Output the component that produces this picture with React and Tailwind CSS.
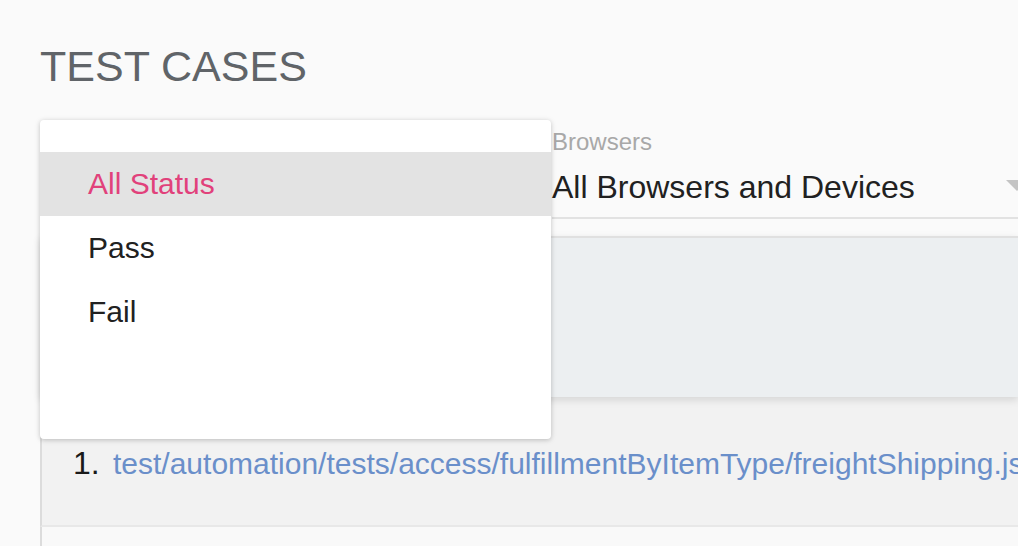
const statusOptions = ['All Status', 'Pass', 'Fail'];

function Select({ label, value, arrow, className }) {
  return (
    <div className={className}>
      <div className="text-[24px] leading-none text-[#a8a8a8]">{label}</div>
      <div className="mt-[17px] flex items-start justify-between border-b-2 border-[#e2e2e2] pb-[14px]">
        <span className="h-8 text-[32px] leading-none text-[#212121] whitespace-nowrap">{value}</span>
        {arrow && (
          <span className="mt-[9px] mr-[14px] h-0 w-0 border-x-[11px] border-t-[11px] border-x-transparent border-t-[#c4c4c4]" />
        )}
      </div>
    </div>
  );
}

export default function App() {
  return (
    <div className="h-[546px] w-full overflow-hidden bg-[#fafafa] font-['Liberation_Sans',Arial,sans-serif]">
      <div className="pl-10 pt-[45px]">
        <h1 className="text-[43px] leading-none text-[#606468] whitespace-nowrap">TEST CASES</h1>

        <div className="relative mt-[42px] flex gap-8">
          {/* status select sits under the open menu */}
          <Select label="" value="" className="w-[480px] shrink-0" />
          <Select label="Browsers" value="All Browsers and Devices" arrow className="w-[490px] shrink-0" />

          <div className="absolute left-0 top-[-10px] z-20 w-[511px] rounded-[4px] bg-white pt-8 pb-[95px] shadow-[0_1px_6px_rgba(0,0,0,0.12),0_1px_4px_rgba(0,0,0,0.12)]">
            {statusOptions.map((opt, i) => (
              <div
                key={opt}
                className={`h-16 pl-[48px] text-[30px] leading-[64px] ${i === 0 ? 'bg-[#e3e3e3] text-[#e1417b]' : 'text-[#212121]'}`}
              >
                {opt}
              </div>
            ))}
          </div>
        </div>

        <div className="relative z-10 mt-[17px] h-[161px] border-t-2 border-[#e0e0e0] bg-[#eceff1] shadow-[0_3px_8px_rgba(0,0,0,0.12)]" />

        <div className="h-[130px] border-l-2 border-b-2 border-l-[#dcdcdc] border-b-[#e8e8e8] bg-[#f2f2f2] pt-[51px]">
          <div className="flex items-baseline whitespace-nowrap leading-[30px]">
            <span className="ml-[31px] w-[40px] shrink-0 text-[32px] text-[#1a1a1a]">1.</span>
            <span className="shrink-0 text-[30px] text-[#6a8fca]">test/automation/tests/access/fulfillmentByItemType/freightShipping.js</span>
          </div>
        </div>
        <div className="h-[60px] border-l-2 border-[#dcdcdc] bg-[#f9f9f9]" />
      </div>
    </div>
  );
}
